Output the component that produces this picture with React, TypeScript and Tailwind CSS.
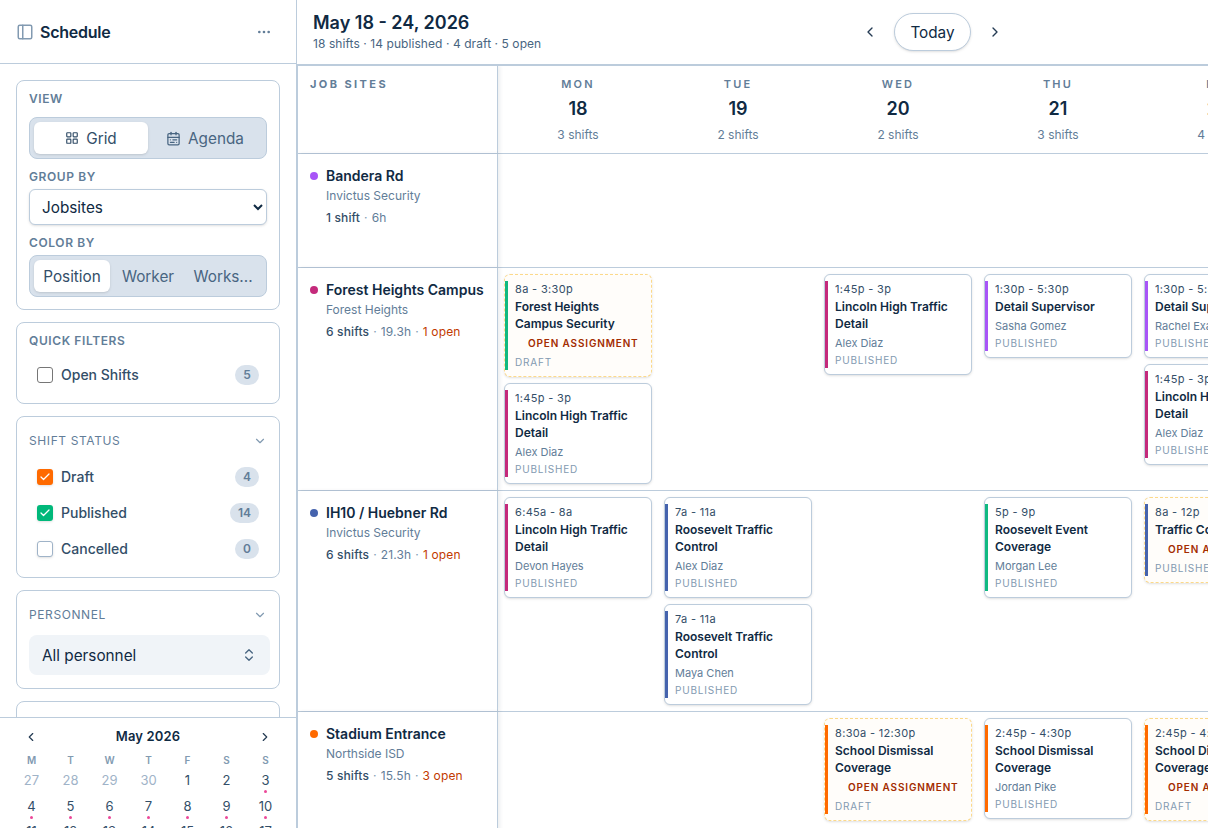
import { CalendarRange, Check, ChevronDown, ChevronLeft, ChevronRight, ChevronsUpDown, Ellipsis, LayoutGrid, PanelLeft } from 'lucide-react'

type Shift = {
  time: string
  title: string
  worker?: string
  status: 'DRAFT' | 'PUBLISHED'
  bar: string
  open?: boolean
}

const green = 'bg-[#10b981]'
const magenta = 'bg-[#c42a7b]'
const purple = 'bg-[#a855f7]'
const indigo = 'bg-[#4563ad]'
const orange = 'bg-[#ff6a00]'

const days = [
  { name: 'MON', num: '18', count: '3 shifts' },
  { name: 'TUE', num: '19', count: '2 shifts' },
  { name: 'WED', num: '20', count: '2 shifts' },
  { name: 'THU', num: '21', count: '3 shifts' },
  { name: 'FRI', num: '22', count: '4 shifts' },
]

const rows: {
  name: string
  org: string
  shifts: string
  hours: string
  open?: string
  dot: string
  cells: Shift[][]
}[] = [
  { name: 'Bandera Rd', org: 'Invictus Security', shifts: '1 shift', hours: '6h', dot: purple, cells: [[], [], [], [], []] },
  {
    name: 'Forest Heights Campus',
    org: 'Forest Heights',
    shifts: '6 shifts',
    hours: '19.3h',
    open: '1 open',
    dot: magenta,
    cells: [
      [
        { time: '8a - 3:30p', title: 'Forest Heights Campus Security', status: 'DRAFT', bar: green, open: true },
        { time: '1:45p - 3p', title: 'Lincoln High Traffic Detail', worker: 'Alex Diaz', status: 'PUBLISHED', bar: magenta },
      ],
      [],
      [{ time: '1:45p - 3p', title: 'Lincoln High Traffic Detail', worker: 'Alex Diaz', status: 'PUBLISHED', bar: magenta }],
      [{ time: '1:30p - 5:30p', title: 'Detail Supervisor', worker: 'Sasha Gomez', status: 'PUBLISHED', bar: purple }],
      [
        { time: '1:30p - 5:30p', title: 'Detail Supervisor', worker: 'Rachel Exall', status: 'PUBLISHED', bar: purple },
        { time: '1:45p - 3p', title: 'Lincoln High Traffic Detail', worker: 'Alex Diaz', status: 'PUBLISHED', bar: magenta },
      ],
    ],
  },
  {
    name: 'IH10 / Huebner Rd',
    org: 'Invictus Security',
    shifts: '6 shifts',
    hours: '21.3h',
    open: '1 open',
    dot: indigo,
    cells: [
      [{ time: '6:45a - 8a', title: 'Lincoln High Traffic Detail', worker: 'Devon Hayes', status: 'PUBLISHED', bar: magenta }],
      [
        { time: '7a - 11a', title: 'Roosevelt Traffic Control', worker: 'Alex Diaz', status: 'PUBLISHED', bar: indigo },
        { time: '7a - 11a', title: 'Roosevelt Traffic Control', worker: 'Maya Chen', status: 'PUBLISHED', bar: indigo },
      ],
      [],
      [{ time: '5p - 9p', title: 'Roosevelt Event Coverage', worker: 'Morgan Lee', status: 'PUBLISHED', bar: green }],
      [{ time: '8a - 12p', title: 'Traffic Control', status: 'PUBLISHED', bar: indigo, open: true }],
    ],
  },
  {
    name: 'Stadium Entrance',
    org: 'Northside ISD',
    shifts: '5 shifts',
    hours: '15.5h',
    open: '3 open',
    dot: orange,
    cells: [
      [],
      [],
      [{ time: '8:30a - 12:30p', title: 'School Dismissal Coverage', status: 'DRAFT', bar: orange, open: true }],
      [{ time: '2:45p - 4:30p', title: 'School Dismissal Coverage', worker: 'Jordan Pike', status: 'PUBLISHED', bar: orange }],
      [{ time: '2:45p - 4:30p', title: 'School Dismissal Coverage', status: 'DRAFT', bar: orange, open: true }],
    ],
  },
]

const calendar = [
  ['27', '28', '29', '30', '1', '2', '3'],
  ['4', '5', '6', '7', '8', '9', '10'],
  ['11', '12', '13', '14', '15', '16', '17'],
]

function Label({ children }: { children: string }) {
  return <div className="text-xs leading-4 font-semibold tracking-[0.05em] text-[#627d98]">{children}</div>
}

function FilterRow({ label, count, box }: { label: string; count: string; box: 'none' | 'plain' | 'orange' | 'green' }) {
  return (
    <div className="flex h-5 items-center pl-2">
      {box === 'orange' || box === 'green' ? (
        <div className={`flex h-4 w-4 items-center justify-center rounded-[3px] shadow-sm ${box === 'orange' ? 'bg-[#ff6a00]' : 'bg-[#00b87a]'}`}>
          <Check className="h-3 w-3 text-white" strokeWidth={2.5} />
        </div>
      ) : (
        <div className={`h-4 w-4 rounded-[3px] border bg-white ${box === 'none' ? 'border-[#767676]' : 'border-[#9fb3c8] shadow-sm'}`} />
      )}
      <span className="ml-2 text-sm font-medium text-[#334e68]">{label}</span>
      <span className="ml-auto mr-[8px] flex h-5 min-w-6 items-center justify-center rounded-full bg-[#d9e2ec] px-2 text-xs font-semibold text-[#627d98]">
        {count}
      </span>
    </div>
  )
}

function Card({ shift }: { shift: Shift }) {
  const dashed = shift.status === 'DRAFT' || shift.open
  return (
    <div
      className={`relative rounded-md border px-[10px] pt-[7px] pb-[7px] shadow-sm ${
        dashed ? 'border-dashed border-[#fcd98a] bg-[#fffdfa]' : 'border-[#bcccdc] bg-white'
      }`}
    >
      <div className={`absolute top-[6px] bottom-[6px] left-0 w-[2.5px] ${shift.bar}`} />
      <div className="text-[11px] leading-[14px] tracking-[0.03em] text-[#334e68]">{shift.time}</div>
      <div className="mt-[2px] text-xs leading-[17px] font-semibold text-[#102a43]">{shift.title}</div>
      {shift.worker && <div className="mt-[4px] text-[11px] leading-[14px] text-[#627d98]">{shift.worker}</div>}
      {shift.open && (
        <div className="mt-[4px] ml-[13px] text-[10px] leading-[14px] font-semibold tracking-[0.085em] whitespace-nowrap text-[#a32c00]">
          OPEN ASSIGNMENT
        </div>
      )}
      <div className={`text-[10px] leading-[13px] tracking-[0.08em] text-[#829ab1] ${shift.open ? 'mt-[6px]' : 'mt-[4px]'}`}>{shift.status}</div>
    </div>
  )
}

export default function App() {
  return (
    <div className="flex h-screen w-screen overflow-hidden bg-white font-[Inter,sans-serif] text-[#102a43]">
      <aside className="flex w-[297px] shrink-0 flex-col border-r border-[#bcccdc]">
        <div className="flex h-[64px] shrink-0 items-center border-b border-[#bcccdc] pr-6 pl-4">
          <PanelLeft className="h-[18px] w-[18px] text-[#829ab1]" />
          <span className="ml-1.5 text-base font-semibold tracking-[-0.015em]">Schedule</span>
          <Ellipsis className="ml-auto h-4 w-4 text-[#627d98]" />
        </div>

        <div className="flex min-h-0 flex-1 flex-col gap-3 overflow-hidden px-4 pt-4">
          <section className="shrink-0 rounded-lg border border-[#bcccdc] px-3 pt-[10px] pb-3">
            <Label>VIEW</Label>
            <div className="mt-[10px] flex h-[42px] items-center rounded-lg border border-[#bcccdc] bg-[#d9e2ec] px-1">
              <div className="flex h-8 w-[114px] items-center justify-center gap-[7px] rounded-md bg-white shadow-sm">
                <LayoutGrid className="h-[14px] w-[14px] text-[#334e68]" />
                <span className="pt-[2px] text-[15.3px] text-[#334e68]">Grid</span>
              </div>
              <div className="flex h-8 flex-1 items-center justify-center gap-[7px]">
                <CalendarRange className="h-[15px] w-[15px] text-[#486581]" />
                <span className="pt-[2px] text-[15.3px] text-[#486581]">Agenda</span>
              </div>
            </div>
            <div className="mt-[10px]">
              <Label>GROUP BY</Label>
            </div>
            <select className="mt-[4px] h-9 w-full rounded-md border border-[#bcccdc] bg-white pl-[8px] text-[15.3px] text-[#102a43] shadow-sm">
              <option>Jobsites</option>
            </select>
            <div className="mt-[10px]">
              <Label>COLOR BY</Label>
            </div>
            <div className="mt-[4px] flex h-[42px] items-center rounded-lg border border-[#bcccdc] bg-[#d9e2ec] px-1 text-[15.3px] text-[#486581]">
              <div className="flex h-8 w-[76px] items-center justify-center rounded-md bg-white pt-[2px] text-[#334e68] shadow-sm">Position</div>
              <div className="w-[76px] pt-[2px] text-center">Worker</div>
              <div className="w-[74px] pt-[2px] text-center">Works...</div>
            </div>
          </section>

          <section className="shrink-0 rounded-lg border border-[#bcccdc] px-3 pt-[10px] pb-[18px]">
            <Label>QUICK FILTERS</Label>
            <div className="mt-[16px]">
              <FilterRow label="Open Shifts" count="5" box="none" />
            </div>
          </section>

          <section className="shrink-0 rounded-lg border border-[#bcccdc] px-3 pt-4 pb-[18px]">
            <div className="flex h-4 items-center justify-between">
              <span className="text-xs tracking-[0.05em] text-[#627d98]">SHIFT STATUS</span>
              <ChevronDown className="h-3.5 w-3.5 text-[#829ab1]" />
            </div>
            <div className="mt-[18px] flex flex-col gap-4">
              <FilterRow label="Draft" count="4" box="orange" />
              <FilterRow label="Published" count="14" box="green" />
              <FilterRow label="Cancelled" count="0" box="plain" />
            </div>
          </section>

          <section className="shrink-0 rounded-lg border border-[#bcccdc] pt-4 pr-[9px] pb-[13px] pl-3">
            <div className="flex h-4 items-center justify-between pr-[3px]">
              <span className="text-xs tracking-[0.05em] text-[#627d98]">PERSONNEL</span>
              <ChevronDown className="h-3.5 w-3.5 text-[#829ab1]" />
            </div>
            <div className="mt-[12px] flex h-10 items-center justify-between rounded-lg bg-[#f0f4f8] pr-[13px] pl-[13px]">
              <span className="pt-[2px] text-[15.3px] text-[#102a43]">All personnel</span>
              <ChevronsUpDown className="h-4 w-4 text-[#486581]" />
            </div>
          </section>

          <section className="h-10 shrink-0 rounded-lg border border-[#bcccdc]" />
        </div>

        <div className="h-[111px] shrink-0 overflow-hidden border-t border-[#bcccdc] bg-white px-3">
          <div className="flex h-9 items-center justify-between px-[12px] pt-[1px]">
            <ChevronLeft className="h-3.5 w-3.5 text-[#243b53]" />
            <span className="text-[13px] font-semibold tracking-[0.01em]">May 2026</span>
            <ChevronRight className="h-3.5 w-3.5 text-[#243b53]" />
          </div>
          <div className="grid grid-cols-[repeat(7,39px)]">
            {['M', 'T', 'W', 'T', 'F', 'S', 'S'].map((d, i) => (
              <div key={i} className="text-center text-[10px] leading-[12px] font-semibold text-[#829ab1]">
                {d}
              </div>
            ))}
          </div>
          <div className="mt-[6px] grid grid-cols-[repeat(7,39px)]">
            {calendar.flat().map((d, i) => (
              <div key={i} className="relative h-[25.5px] text-center">
                <div className={`text-[13px] leading-[16px] ${i < 4 ? 'text-[#9fb3c8]' : 'text-[#334e68]'}`}>{d}</div>
                {i >= 6 && <div className="absolute top-[18px] left-[18px] h-[3px] w-[3px] rounded-full bg-[#ec4899]" />}
              </div>
            ))}
          </div>
        </div>
      </aside>

      <main className="flex min-w-0 flex-1 flex-col">
        <header className="flex h-[64px] shrink-0 items-center justify-between pr-[205px] pl-4">
          <div>
            <h1 className="text-lg leading-[20px] font-semibold">May 18 - 24, 2026</h1>
            <p className="mt-[3px] text-xs leading-4 tracking-[0.006em] text-[#486581]">18 shifts · 14 published · 4 draft · 5 open</p>
          </div>
          <div className="flex items-center gap-[16px]">
            <ChevronLeft className="h-4 w-4 text-[#243b53]" />
            <button className="h-[38px] w-[77px] rounded-full border border-[#bcccdc] bg-white pt-[2px] text-[15.3px] text-[#102a43] shadow-sm">Today</button>
            <ChevronRight className="h-4 w-4 text-[#243b53]" />
          </div>
        </header>

        <div className="min-h-0 flex-1 overflow-hidden border-t-2 border-l border-[#bcccdc]">
          <div className="w-max">
            <div className="flex h-[88px] border-b border-[#bcccdc]">
              <div className="relative z-10 w-[200px] border-r border-[#bcccdc] bg-white pt-[11px] pl-3 text-[11px] leading-[14px] font-bold tracking-[0.22em] text-[#627d98] shadow-[2px_0_4px_rgba(16,42,67,0.08)]">
                JOB SITES
              </div>
              {days.map((d) => (
                <div key={d.name} className="flex w-[160px] flex-col items-center pt-[11px]">
                  <div className="text-[11px] leading-[14px] font-semibold tracking-[0.2em] text-[#627d98]">{d.name}</div>
                  <div className="mt-[6px] text-lg leading-[24px] font-semibold">{d.num}</div>
                  <div className="mt-[6px] text-xs leading-4 text-[#627d98]">{d.count}</div>
                </div>
              ))}
            </div>

            {rows.map((r) => (
              <div key={r.name} className="flex min-h-[114px] border-b border-[#bcccdc] last:min-h-[130px]">
                <div className="relative z-10 w-[200px] shrink-0 border-r border-[#bcccdc] bg-white pt-3 pl-3 shadow-[2px_0_4px_rgba(16,42,67,0.08)]">
                  <div className="flex items-center">
                    <span className={`h-2 w-2 rounded-full ${r.dot}`} />
                    <span className="ml-2 text-sm leading-5 font-semibold whitespace-nowrap">{r.name}</span>
                  </div>
                  <div className="mt-[2px] pl-4 text-xs leading-4 text-[#627d98]">{r.org}</div>
                  <div className="mt-[6px] flex gap-[4px] pl-4 text-xs leading-4 tracking-[0.012em] text-[#829ab1]">
                    <span className="font-medium text-[#334e68]">{r.shifts}</span>
                    <span>·</span>
                    <span className="text-[#627d98]">{r.hours}</span>
                    {r.open && (
                      <>
                        <span>·</span>
                        <span className="text-[#c23a00]">{r.open}</span>
                      </>
                    )}
                  </div>
                </div>
                {r.cells.map((cell, i) => (
                  <div key={i} className="flex w-[160px] shrink-0 flex-col gap-[6px] p-[6px]">
                    {cell.map((s, j) => (
                      <Card key={j} shift={s} />
                    ))}
                  </div>
                ))}
              </div>
            ))}
          </div>
        </div>
      </main>
    </div>
  )
}
